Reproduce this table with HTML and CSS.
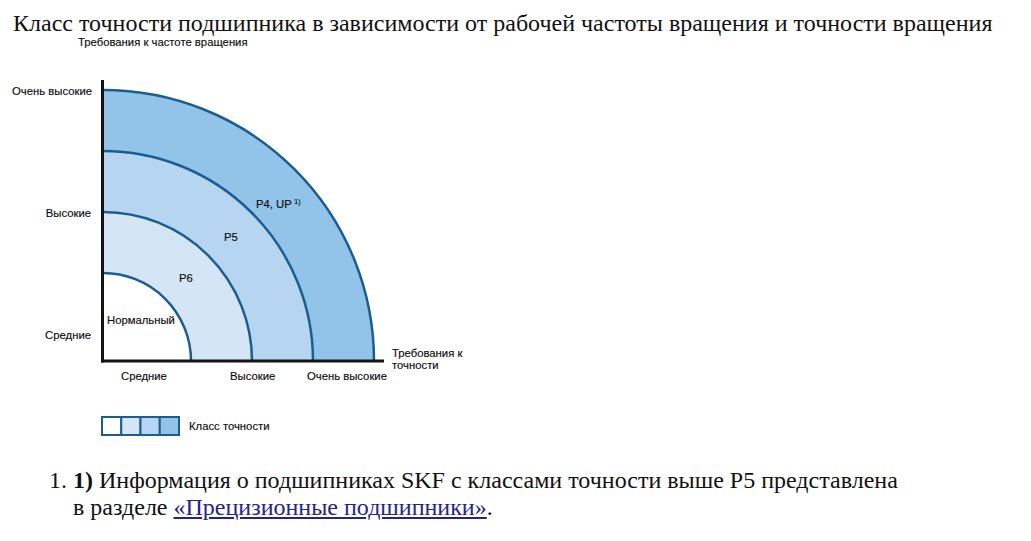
FILE: index.html
```html
<!DOCTYPE html>
<html lang="ru">
<head>
<meta charset="utf-8">
<title>Класс точности подшипника</title>
<link rel="stylesheet" href="styles.css">
</head>
<body>
<h1 class="title">Класс точности подшипника в зависимости от рабочей частоты вращения и точности вращения</h1>
<svg class="chart" width="480" height="413" viewBox="0 35 480 413" xmlns="http://www.w3.org/2000/svg">
  <g class="bands">
    <path class="band-4" d="M103 361 L103 90 A271 271 0 0 1 374 361 Z"/>
    <path class="band-3" d="M103 361 L103 151 A210 210 0 0 1 313 361 Z"/>
    <path class="band-2" d="M103 361 L103 212 A149 149 0 0 1 252 361 Z"/>
    <path class="band-1" d="M103 361 L103 273 A88 88 0 0 1 191 361 Z"/>
  </g>
  <g class="arcs">
    <path d="M103 90 A271 271 0 0 1 374 361"/>
    <path d="M103 151 A210 210 0 0 1 313 361"/>
    <path d="M103 212 A149 149 0 0 1 252 361"/>
    <path d="M103 273 A88 88 0 0 1 191 361"/>
  </g>
  <g class="axes">
    <line x1="102.5" y1="80" x2="102.5" y2="362.5"/>
    <line x1="101" y1="361" x2="384" y2="361"/>
  </g>
  <g class="lbl">
    <text x="78" y="45.5">Требования к частоте вращения</text>
    <text x="92" y="95" text-anchor="end">Очень высокие</text>
    <text x="91" y="217" text-anchor="end">Высокие</text>
    <text x="91" y="339" text-anchor="end">Средние</text>
    <text x="107" y="324">Нормальный</text>
    <text x="179" y="282">P6</text>
    <text x="224" y="241">P5</text>
    <text x="256" y="208">P4, UP<tspan class="sup" dx="2.5" dy="-4.5">1)</tspan></text>
    <text x="121" y="380">Средние</text>
    <text x="230" y="380">Высокие</text>
    <text x="307" y="380">Очень высокие</text>
    <text x="392" y="356.5">Требования к</text>
    <text x="392" y="368.5">точности</text>
    <text x="189" y="430">Класс точности</text>
  </g>
  <g class="legend">
    <rect class="band-1" x="102" y="417" width="19.25" height="18"/>
    <rect class="band-2" x="121.25" y="417" width="19.25" height="18"/>
    <rect class="band-3" x="140.5" y="417" width="19.25" height="18"/>
    <rect class="band-4" x="159.75" y="417" width="19.25" height="18"/>
  </g>
</svg>
<ol class="notes">
  <li><b>1)</b> Информация о подшипниках SKF с классами точности выше P5 представлена<br>в разделе <a href="#">«Прецизионные подшипники»</a>.</li>
</ol>
</body>
</html>
```
FILE: styles.css
```css
html, body {
  margin: 0;
  padding: 0;
  background: #ffffff;
}
body {
  font-family: "Liberation Serif", "Times New Roman", serif;
  color: #111111;
}
.title {
  margin: 0;
  padding: 12px 0 0 13px;
  font-size: 24px;
  line-height: 23px;
  font-weight: normal;
  white-space: nowrap;
}
.chart {
  display: block;
}
.band-1 { fill: #ffffff; }
.band-2 { fill: #d4e6f6; }
.band-3 { fill: #b5d5f0; }
.band-4 { fill: #92c4ea; }
.arcs path {
  fill: none;
  stroke: #1d5d8e;
  stroke-width: 2.5;
}
.axes line {
  stroke: #141414;
  stroke-width: 3;
}
.lbl text {
  font-family: "Liberation Sans", Arial, sans-serif;
  font-size: 11.3px;
  fill: #0d0d0d;
  stroke: #0d0d0d;
  stroke-width: 0.15;
}
.lbl .sup {
  font-size: 7px;
}
.legend rect {
  stroke: #1d5d8e;
  stroke-width: 2;
}
.notes {
  margin: 19px 0 0 0;
  padding-left: 73px;
  font-size: 24px;
  line-height: 27px;
}
.notes a {
  color: #23238e;
}
```
